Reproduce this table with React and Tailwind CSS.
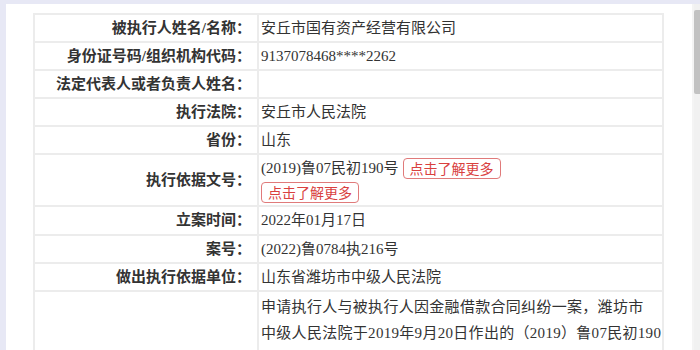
import React from 'react'

const rows = [
  { label: '被执行人姓名/名称：', value: '安丘市国有资产经营有限公司', h: 'h-[28px]' },
  { label: '身份证号码/组织机构代码：', value: '9137078468****2262', h: 'h-[28px]', num: true },
  { label: '法定代表人或者负责人姓名：', value: '', h: 'h-[28px]' },
  { label: '执行法院：', value: '安丘市人民法院', h: 'h-[28px]' },
  { label: '省份：', value: '山东', h: 'h-[28px]' },
]

const rows2 = [
  { label: '立案时间：', value: '2022年01月17日', h: 'h-[29px]' },
  { label: '案号：', value: '(2022)鲁0784执216号', h: 'h-[28px]' },
  { label: '做出执行依据单位：', value: '山东省潍坊市中级人民法院', h: 'h-[28px]' },
]

function MoreBtn(){
  return (
    <span className="inline-flex items-center h-[21px] px-[6px] rounded-[4px] border border-[#e07a7a] text-[#d9413f] text-[14px] leading-none font-['Noto_Sans_CJK_SC',sans-serif]">
      点击了解更多
    </span>
  )
}

function Row({ label, children, h }){
  return (
    <tr className={h}>
      <td className="w-[224px] border-2 border-[#ececec] pr-[6px] text-right font-semibold text-[#333] align-middle">{label}</td>
      <td className="border-2 border-[#ececec] pl-[2px] text-[#333] align-middle">{children}</td>
    </tr>
  )
}

export default function App(){
  return (
    <div className="w-[700px] h-[350px] overflow-hidden bg-[#e7e8f5] flex font-['Liberation_Serif','Noto_Sans_CJK_SC',serif] text-[15px]">
      <div className="w-[6px] shrink-0" />
      <div className="flex-1 mt-[4px] bg-white pl-[27px] pt-[9px] pr-[28px]">
        <table className="w-[631px] border-collapse">
          <tbody>
            {rows.map(r => <Row key={r.label} label={r.label} h={r.h}>{r.value}</Row>)}
            <tr className="h-[52px]">
              <td className="w-[224px] border-2 border-[#ececec] pr-[6px] text-right font-semibold text-[#333]">执行依据文号：</td>
              <td className="border-2 border-[#ececec] pl-[2px] text-[#333]">
                <div className="flex items-center gap-[4px] h-[24px]">
                  <span>(2019)鲁07民初190号</span>
                  <MoreBtn />
                </div>
                <div className="flex items-center h-[24px]">
                  <MoreBtn />
                </div>
              </td>
            </tr>
            {rows2.map(r => <Row key={r.label} label={r.label} h={r.h}>{r.value}</Row>)}
            <tr>
              <td className="w-[224px] border-2 border-[#ececec]"></td>
              <td className="border-2 border-[#ececec] pl-[2px] pt-[2px] text-[#333] leading-[26px] tracking-[0.3px]">
                <span className="block whitespace-nowrap">申请执行人与被执行人因金融借款合同纠纷一案，潍坊市</span>
                <span className="block whitespace-nowrap">中级人民法院于2019年9月20日作出的（2019）鲁07民初190</span>
                <span className="block whitespace-nowrap">号民事判决书，判决被执行人一山东华玫实业股份有限公</span>
              </td>
            </tr>
          </tbody>
        </table>
      </div>
      <div className="w-[8px] shrink-0 mt-[4px] flex">
        <div className="w-[2px] bg-[#f4f4f4]" />
        <div className="flex-1 flex flex-col bg-[#f1f1f1]">
          <div className="mt-[6px] h-[84px] bg-[#c2c2c2] rounded-l-[2px]" />
        </div>
      </div>
    </div>
  )
}
